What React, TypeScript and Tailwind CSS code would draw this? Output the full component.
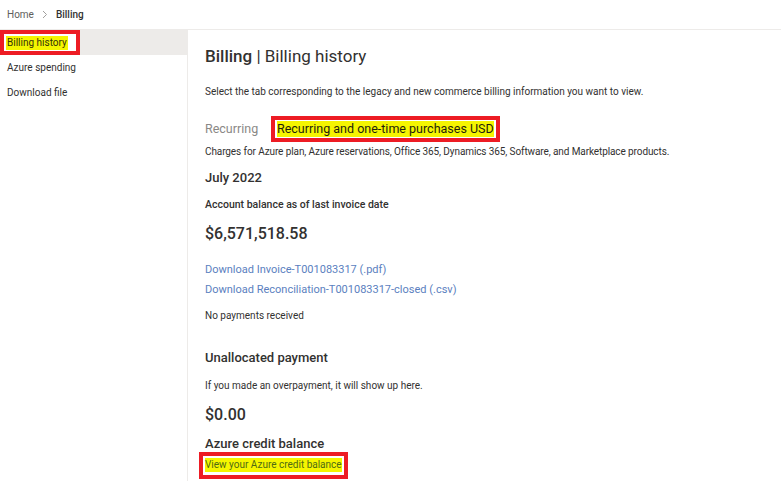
export default function App() {
  return (
    <main className="min-h-screen w-[781px] h-[481px] overflow-hidden bg-white text-[#323130] font-['Roboto',sans-serif]">
      <nav className="h-[30px] flex items-center gap-[8px] px-[7px] text-[10px] border-b border-[#edebe9]">
        <span className="text-[#605e5c]">Home</span>
        <svg width="6" height="9" viewBox="0 0 6 9" className="text-[#a19f9d]">
          <path d="M1 1l3.5 3.5L1 8" fill="none" stroke="currentColor" strokeWidth="1" />
        </svg>
        <span className="font-medium">Billing</span>
      </nav>

      <div className="flex h-[451px]">
        <aside className="w-[188px] shrink-0 border-r border-[#edebe9] text-[10px]">
          <div className="h-[25px] bg-[#edebe9] flex items-center">
            <span className="h-[25px] border-[4px] border-[#ed1c24] bg-white flex items-center pl-[2px] pr-[8px]">
              <span className="bg-[#f5f500] text-[#33330a] leading-[14px] px-[1px]">Billing history</span>
            </span>
          </div>
          <div className="h-[25px] flex items-center px-[7px]">Azure spending</div>
          <div className="h-[24px] flex items-center px-[7px]">Download file</div>
        </aside>

        <section className="flex-1 pl-[17px] pt-[14px]">
          <h1 className="text-[17px] leading-[24px]">
            <span className="font-medium">Billing</span> | Billing history
          </h1>
          <p className="mt-[16px] text-[10px] leading-[16px]">
            Select the tab corresponding to the legacy and new commerce billing information you want to view.
          </p>

          <div className="mt-[16px] flex items-center h-[26px] text-[12.5px]">
            <span className="text-[#8a8886] w-[66px]">Recurring</span>
            <span className="h-[26px] border-[4px] border-[#ed1c24] flex items-center px-[2px]">
              <span className="bg-[#f5f500] text-[#1f1f0a] leading-[16px]">Recurring and one-time purchases USD</span>
            </span>
          </div>

          <p className="mt-[2px] text-[10px] leading-[16px] tracking-[-0.1px]">
            Charges for Azure plan, Azure reservations, Office 365, Dynamics 365, Software, and Marketplace products.
          </p>

          <h2 className="mt-[8px] text-[13px] leading-[20px] font-medium">July 2022</h2>
          <h3 className="mt-[9px] text-[10.5px] leading-[16px] font-medium">Account balance as of last invoice date</h3>
          <div className="mt-[7px] text-[16px] leading-[28px] font-medium">$6,571,518.58</div>

          <a href="#" className="block mt-[14px] text-[11px] leading-[16px] text-[#5b7fc0]">
            Download Invoice-T001083317 (.pdf)
          </a>
          <a href="#" className="block mt-[4px] text-[11px] leading-[16px] text-[#5b7fc0]">
            Download Reconciliation-T001083317-closed (.csv)
          </a>
          <p className="mt-[10px] text-[10px] leading-[16px]">No payments received</p>

          <h2 className="mt-[24px] text-[13px] leading-[20px] font-medium">Unallocated payment</h2>
          <p className="mt-[10px] text-[10px] leading-[16px]">If you made an overpayment, it will show up here.</p>
          <div className="mt-[7px] text-[16px] leading-[28px] font-medium">$0.00</div>

          <h2 className="mt-[7px] text-[13px] leading-[16px] font-medium">Azure credit balance</h2>
          <div className="ml-[-6px] -mt-[1px]">
            <a href="#" className="inline-flex items-center h-[27px] border-[4px] border-[#ed1c24] px-[2px] text-[10px]">
              <span className="bg-[#f5f500] text-[#4f6b14] leading-[14px]">View your Azure credit balance</span>
            </a>
          </div>
        </section>
      </div>
    </main>
  )
}
